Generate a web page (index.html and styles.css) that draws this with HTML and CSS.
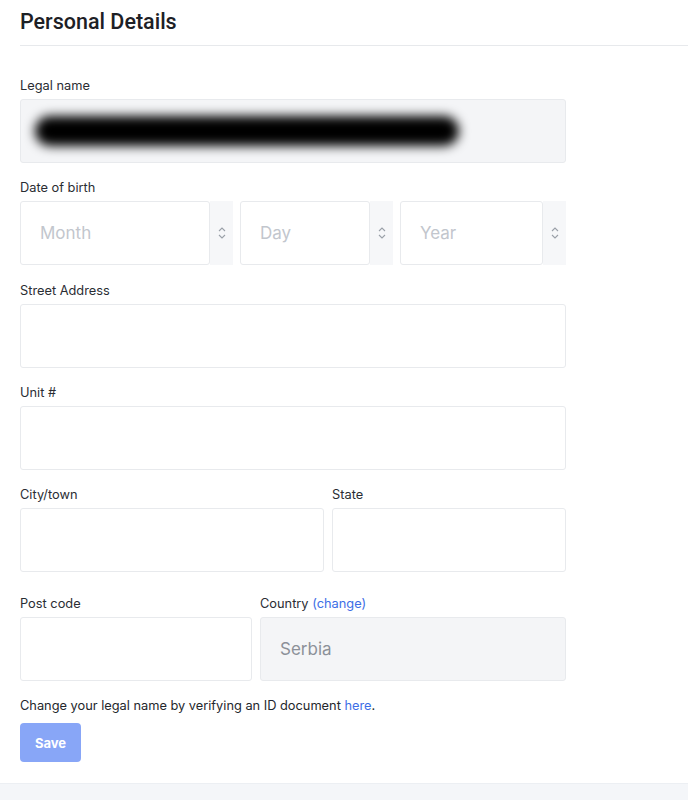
FILE: index.html
```html
<!DOCTYPE html>
<html lang="en">
<head>
<meta charset="utf-8">
<title>Personal Details</title>
<link rel="stylesheet" href="styles.css">
</head>
<body>
<div class="page">
  <header class="header">
    <h1 class="title">Personal Details</h1>
  </header>
  <form class="form">
    <div class="field">
      <label class="label">Legal name</label>
      <div class="input input-disabled input-name"><span class="redact"></span></div>
    </div>
    <div class="field field-dob">
      <label class="label">Date of birth</label>
      <div class="dob">
        <div class="select sel-month"><div class="select-box">Month</div><div class="select-arrow"><svg width="8" height="14" viewBox="0 0 8 14"><path d="M1 5 L4 2 L7 5 M1 9 L4 12 L7 9" fill="none" stroke="#9aa0a8" stroke-width="1.1"/></svg></div></div>
        <div class="select sel-day"><div class="select-box">Day</div><div class="select-arrow"><svg width="8" height="14" viewBox="0 0 8 14"><path d="M1 5 L4 2 L7 5 M1 9 L4 12 L7 9" fill="none" stroke="#9aa0a8" stroke-width="1.1"/></svg></div></div>
        <div class="select sel-year"><div class="select-box">Year</div><div class="select-arrow"><svg width="8" height="14" viewBox="0 0 8 14"><path d="M1 5 L4 2 L7 5 M1 9 L4 12 L7 9" fill="none" stroke="#9aa0a8" stroke-width="1.1"/></svg></div></div>
      </div>
    </div>
    <div class="field">
      <label class="label">Street Address</label>
      <div class="input"></div>
    </div>
    <div class="field">
      <label class="label">Unit #</label>
      <div class="input"></div>
    </div>
    <div class="row row-city">
      <div class="field col-city">
        <label class="label">City/town</label>
        <div class="input"></div>
      </div>
      <div class="field col-state">
        <label class="label">State</label>
        <div class="input"></div>
      </div>
    </div>
    <div class="row row-post">
      <div class="field col-post">
        <label class="label">Post code</label>
        <div class="input"></div>
      </div>
      <div class="field col-country">
        <label class="label">Country <a class="link" href="#">(change)</a></label>
        <div class="input input-disabled input-country">Serbia</div>
      </div>
    </div>
    <p class="note">Change your legal name by verifying an ID document <a class="link" href="#">here</a>.</p>
    <button class="save" type="button">Save</button>
  </form>
</div>
<div class="footer-band"></div>
</body>
</html>
```

FILE: styles.css
```css
* { box-sizing: border-box; }
html, body { margin: 0; padding: 0; background: #ffffff; }
body {
  font-family: "Inter", "Roboto", "Liberation Sans", sans-serif;
  color: #24272c;
  overflow: hidden;
}
.page { padding-left: 20px; }
.header {
  border-bottom: 1px solid #e7e9ec;
  padding: 10px 0 11px;
}
.title {
  margin: 0;
  font-family: "Roboto", "Inter", sans-serif;
  font-size: 21.5px;
  line-height: 24px;
  font-weight: 500;
  color: #1d2025;
}
.form {
  width: 546px;
  padding-top: 31px;
}
.field { margin-bottom: 16px; }
.field-dob { margin-bottom: 17px; }
.label {
  display: block;
  font-size: 12.8px;
  line-height: 17px;
  margin-bottom: 5px;
  color: #2a2d33;
}
.input {
  height: 64px;
  border: 1px solid #e8eaed;
  border-radius: 3px;
  background: #fff;
}
.input-disabled { background: #f4f5f7; }
.input-name {
  display: flex;
  align-items: center;
  padding-left: 14px;
}
.redact {
  display: block;
  width: 424px;
  height: 30px;
  background: #000;
  border-radius: 15px;
  filter: blur(5.5px);
}
.dob { display: flex; gap: 7px; }
.select { display: flex; height: 64px; }
.sel-month { width: 213px; }
.sel-day { width: 153px; }
.sel-year { width: 166px; }
.select-box {
  flex: 1;
  border: 1px solid #e8eaed;
  border-radius: 3px;
  background: #fff;
  display: flex;
  align-items: center;
  padding-left: 19px;
  font-size: 17px;
  color: #c2c6cd;
}
.select-arrow {
  width: 23px;
  background: #f6f7f9;
  display: flex;
  align-items: center;
  justify-content: center;
}
.row { display: flex; gap: 8px; }
.col-city { width: 304px; }
.col-state { flex: 1; }
.row-post { margin-top: 7px; }
.col-post { width: 232px; }
.col-country { flex: 1; }
.input-country {
  display: flex;
  align-items: center;
  padding-left: 19px;
  font-size: 17px;
  color: #8c9199;
}
.link { color: #3d6ee6; text-decoration: none; }
.note {
  margin: 1px 0 9px;
  font-size: 12.8px;
  line-height: 16px;
  color: #24272c;
}
.save {
  display: block;
  width: 61px;
  height: 39px;
  border: none;
  border-radius: 4px;
  background: #88a6f7;
  color: #fff;
  font-family: "Inter", "Roboto", sans-serif;
  font-size: 13px;
  font-weight: 700;
  padding: 0;
}
.footer-band {
  margin-top: 21px;
  height: 40px;
  background: #f4f6f9;
  border-top: 1px solid #eceff3;
}
```
